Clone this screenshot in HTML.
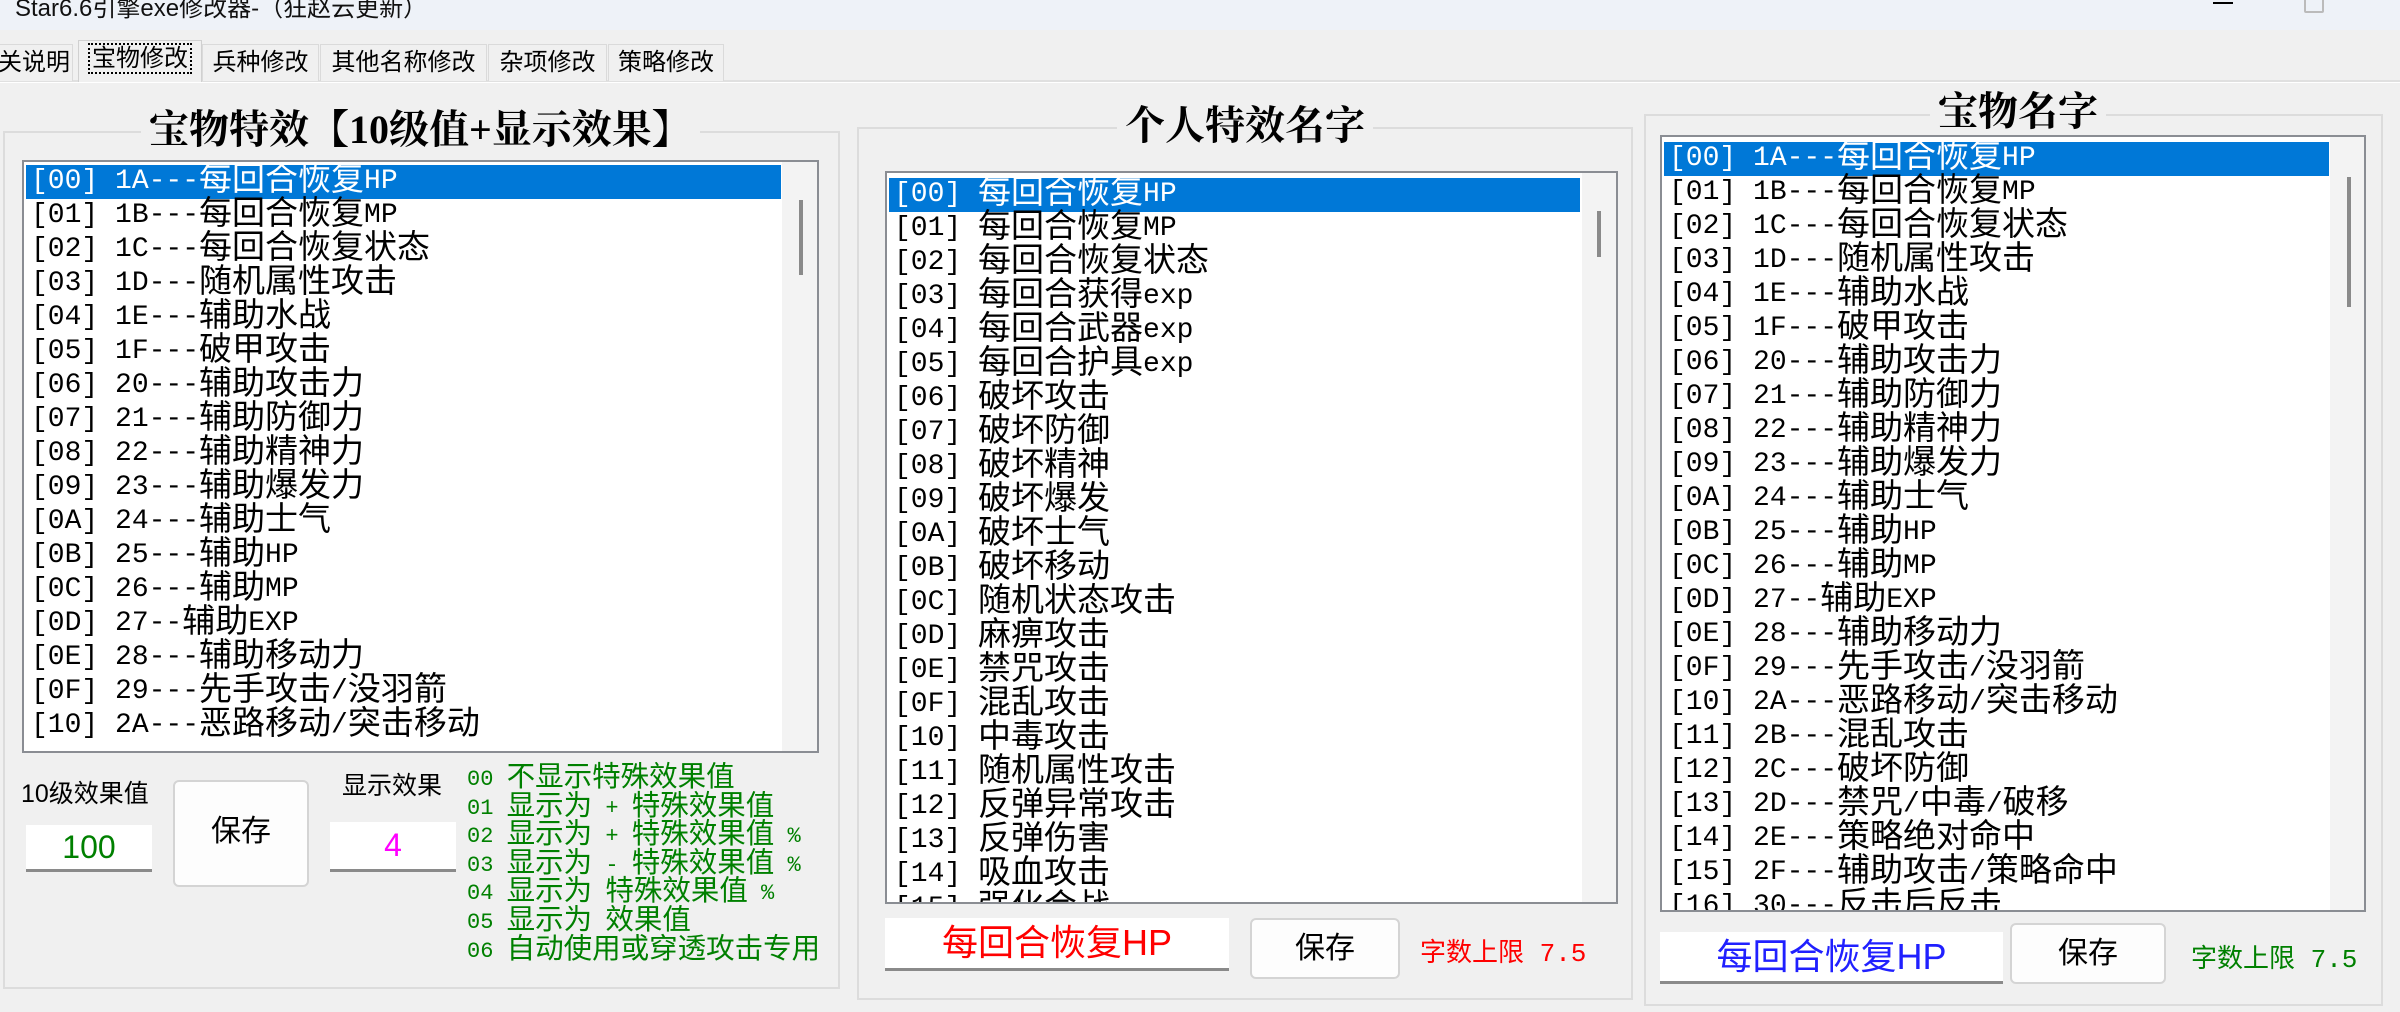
<!DOCTYPE html>
<html><head><meta charset="utf-8"><style>
*{margin:0;padding:0;box-sizing:border-box}
body{width:2400px;height:1012px;background:#f0f0f0;position:relative;overflow:hidden;font-family:"Liberation Sans","Noto Sans CJK SC",sans-serif}
.abs{position:absolute}
.tb{left:0;top:0;width:2400px;height:30px;background:#eef2f8}
.tt{left:15px;top:-12px;font-size:24px;color:#111;white-space:nowrap}
.tab{top:44px;height:37px;border:1px solid #dadada;border-bottom:none;font-size:24px;line-height:36px;text-align:center;color:#000;background:#f0f0f0;white-space:nowrap}
.sel{top:40px;height:42px;background:#f0f0f0;border-color:#d0d0d0}
.grp{border:2px solid #dcdcdc}
.gt{font-family:"Liberation Serif","Noto Serif CJK SC",serif;font-weight:bold;font-size:40px;background:#f0f0f0;padding:0 8px;white-space:nowrap;line-height:42px}
.lb{background:#fff;border:2px solid #8a8d93;overflow:hidden}
.it{font-family:"Liberation Mono","Noto Sans CJK SC",monospace;font-size:28px;line-height:34px;height:34px;white-space:pre;color:#000;padding-left:5px}
.it i,.gr i{font-style:normal;font-size:33px;line-height:0;font-family:"Noto Sans CJK SC",sans-serif;position:relative;top:2px}
.it.s{background:#0078d7;color:#fff}
.sb{background:#f3f3f3}
.th{background:#8a8a8a;width:4px}
.ed{background:#fff;border-bottom:3px solid #8a8a8a;text-align:center}
.bt{background:#fdfdfd;border:2px solid #d4d4d4;border-radius:6px;text-align:center;font-size:30px;color:#000}
.gr{font-family:"Liberation Mono","Noto Sans CJK SC",monospace;font-size:22px;line-height:28.6px;color:#008000;white-space:pre}
.gr i{font-size:28.5px;top:1px}
</style></head><body>
<div class="abs tb"></div>
<div class="abs tt">Star6.6引擎exe修改器-（狂赵云更新）</div>
<div class="abs" style="left:2213px;top:2px;width:20px;height:2px;background:#000"></div>
<div class="abs" style="left:2304px;top:-4px;width:20px;height:17px;border:2px solid #bbb;border-radius:2px"></div>
<div class="abs" style="left:0;top:80px;width:2400px;height:2px;background:#e0e0e0"></div>
<div class="abs" style="left:0;top:82px;width:2400px;height:1px;background:#fff"></div>

<div class="abs tab" style="left:-3px;width:76px;text-align:right;padding-right:6px">关说明</div>
<div class="abs tab sel" style="left:78px;width:124px"><span style="border:2px dotted #000;padding:0 2px">宝物修改</span></div>
<div class="abs tab" style="left:202px;width:117px">兵种修改</div>
<div class="abs tab" style="left:320px;width:167px">其他名称修改</div>
<div class="abs tab" style="left:488px;width:119px">杂项修改</div>
<div class="abs tab" style="left:608px;width:116px">策略修改</div>

<!-- group 1 -->
<div class="abs grp" style="left:3px;top:131px;width:837px;height:858px"></div>
<div class="abs gt" style="left:141px;top:109px">宝物特效【10级值+显示效果】</div>
<div class="abs lb" style="left:22px;top:160px;width:797px;height:593px">
<div class="abs sb" style="left:758px;top:0;width:35px;height:589px"></div>
<div class="abs th" style="left:775px;top:38px;height:75px"></div>
<div class="abs" style="left:2px;top:3px;width:755px">
<div class="it s">[00] 1A---<i>每回合恢复</i>HP</div>
<div class="it">[01] 1B---<i>每回合恢复</i>MP</div>
<div class="it">[02] 1C---<i>每回合恢复状态</i></div>
<div class="it">[03] 1D---<i>随机属性攻击</i></div>
<div class="it">[04] 1E---<i>辅助水战</i></div>
<div class="it">[05] 1F---<i>破甲攻击</i></div>
<div class="it">[06] 20---<i>辅助攻击力</i></div>
<div class="it">[07] 21---<i>辅助防御力</i></div>
<div class="it">[08] 22---<i>辅助精神力</i></div>
<div class="it">[09] 23---<i>辅助爆发力</i></div>
<div class="it">[0A] 24---<i>辅助士气</i></div>
<div class="it">[0B] 25---<i>辅助</i>HP</div>
<div class="it">[0C] 26---<i>辅助</i>MP</div>
<div class="it">[0D] 27--<i>辅助</i>EXP</div>
<div class="it">[0E] 28---<i>辅助移动力</i></div>
<div class="it">[0F] 29---<i>先手攻击</i>/<i>没羽箭</i></div>
<div class="it">[10] 2A---<i>恶路移动</i>/<i>突击移动</i></div>
</div></div>
<div class="abs" style="left:21px;top:774px;font-size:25px;white-space:nowrap">10级效果值</div>
<div class="abs ed" style="left:26px;top:825px;width:126px;height:47px;font-size:32px;line-height:44px;color:#008000">100</div>
<div class="abs bt" style="left:173px;top:780px;width:136px;height:107px;line-height:100px">保存</div>
<div class="abs" style="left:342px;top:766px;font-size:25px;white-space:nowrap">显示效果</div>
<div class="abs ed" style="left:330px;top:822px;width:126px;height:50px;font-size:32px;line-height:46px;color:#ff00ff">4</div>
<div class="abs gr" style="left:467px;top:766px">00 <i>不显示特殊效果值</i>
01 <i>显示为</i> + <i>特殊效果值</i>
02 <i>显示为</i> + <i>特殊效果值</i> %
03 <i>显示为</i> - <i>特殊效果值</i> %
04 <i>显示为</i> <i>特殊效果值</i> %
05 <i>显示为</i> <i>效果值</i>
06 <i>自动使用或穿透攻击专用</i></div>

<!-- group 2 -->
<div class="abs grp" style="left:857px;top:127px;width:776px;height:873px"></div>
<div class="abs gt" style="left:1117px;top:105px">个人特效名字</div>
<div class="abs lb" style="left:885px;top:171px;width:733px;height:733px">
<div class="abs sb" style="left:695px;top:0;width:34px;height:729px"></div>
<div class="abs th" style="left:710px;top:38px;height:46px"></div>
<div class="abs" style="left:2px;top:5px;width:691px">
<div class="it s">[00] <i>每回合恢复</i>HP</div>
<div class="it">[01] <i>每回合恢复</i>MP</div>
<div class="it">[02] <i>每回合恢复状态</i></div>
<div class="it">[03] <i>每回合获得</i>exp</div>
<div class="it">[04] <i>每回合武器</i>exp</div>
<div class="it">[05] <i>每回合护具</i>exp</div>
<div class="it">[06] <i>破坏攻击</i></div>
<div class="it">[07] <i>破坏防御</i></div>
<div class="it">[08] <i>破坏精神</i></div>
<div class="it">[09] <i>破坏爆发</i></div>
<div class="it">[0A] <i>破坏士气</i></div>
<div class="it">[0B] <i>破坏移动</i></div>
<div class="it">[0C] <i>随机状态攻击</i></div>
<div class="it">[0D] <i>麻痹攻击</i></div>
<div class="it">[0E] <i>禁咒攻击</i></div>
<div class="it">[0F] <i>混乱攻击</i></div>
<div class="it">[10] <i>中毒攻击</i></div>
<div class="it">[11] <i>随机属性攻击</i></div>
<div class="it">[12] <i>反弹异常攻击</i></div>
<div class="it">[13] <i>反弹伤害</i></div>
<div class="it">[14] <i>吸血攻击</i></div>
<div class="it">[15] <i>强化会战</i></div>
</div></div>
<div class="abs ed" style="left:885px;top:918px;width:344px;height:53px;font-size:36px;line-height:50px;color:#ff0000">每回合恢复HP</div>
<div class="abs bt" style="left:1250px;top:918px;width:150px;height:61px;line-height:57px">保存</div>
<div class="abs" style="left:1420px;top:932px;font-family:'Liberation Mono','Noto Sans CJK SC',monospace;font-size:26px;color:#ff0000;white-space:pre">字数上限 7.5</div>

<!-- group 3 -->
<div class="abs grp" style="left:1644px;top:114px;width:739px;height:892px"></div>
<div class="abs gt" style="left:1930px;top:91px">宝物名字</div>
<div class="abs lb" style="left:1660px;top:135px;width:706px;height:777px">
<div class="abs sb" style="left:668px;top:0;width:34px;height:773px"></div>
<div class="abs th" style="left:685px;top:40px;height:130px"></div>
<div class="abs" style="left:2px;top:5px;width:665px">
<div class="it s">[00] 1A---<i>每回合恢复</i>HP</div>
<div class="it">[01] 1B---<i>每回合恢复</i>MP</div>
<div class="it">[02] 1C---<i>每回合恢复状态</i></div>
<div class="it">[03] 1D---<i>随机属性攻击</i></div>
<div class="it">[04] 1E---<i>辅助水战</i></div>
<div class="it">[05] 1F---<i>破甲攻击</i></div>
<div class="it">[06] 20---<i>辅助攻击力</i></div>
<div class="it">[07] 21---<i>辅助防御力</i></div>
<div class="it">[08] 22---<i>辅助精神力</i></div>
<div class="it">[09] 23---<i>辅助爆发力</i></div>
<div class="it">[0A] 24---<i>辅助士气</i></div>
<div class="it">[0B] 25---<i>辅助</i>HP</div>
<div class="it">[0C] 26---<i>辅助</i>MP</div>
<div class="it">[0D] 27--<i>辅助</i>EXP</div>
<div class="it">[0E] 28---<i>辅助移动力</i></div>
<div class="it">[0F] 29---<i>先手攻击</i>/<i>没羽箭</i></div>
<div class="it">[10] 2A---<i>恶路移动</i>/<i>突击移动</i></div>
<div class="it">[11] 2B---<i>混乱攻击</i></div>
<div class="it">[12] 2C---<i>破坏防御</i></div>
<div class="it">[13] 2D---<i>禁咒</i>/<i>中毒</i>/<i>破移</i></div>
<div class="it">[14] 2E---<i>策略绝对命中</i></div>
<div class="it">[15] 2F---<i>辅助攻击</i>/<i>策略命中</i></div>
<div class="it">[16] 30---<i>反击后反击</i></div>
</div></div>
<div class="abs ed" style="left:1660px;top:932px;width:343px;height:52px;font-size:36px;line-height:49px;color:#2020ff">每回合恢复HP</div>
<div class="abs bt" style="left:2010px;top:923px;width:156px;height:61px;line-height:57px">保存</div>
<div class="abs" style="left:2191px;top:938px;font-family:'Liberation Mono','Noto Sans CJK SC',monospace;font-size:26px;color:#008000;white-space:pre">字数上限 7.5</div>
</body></html>
